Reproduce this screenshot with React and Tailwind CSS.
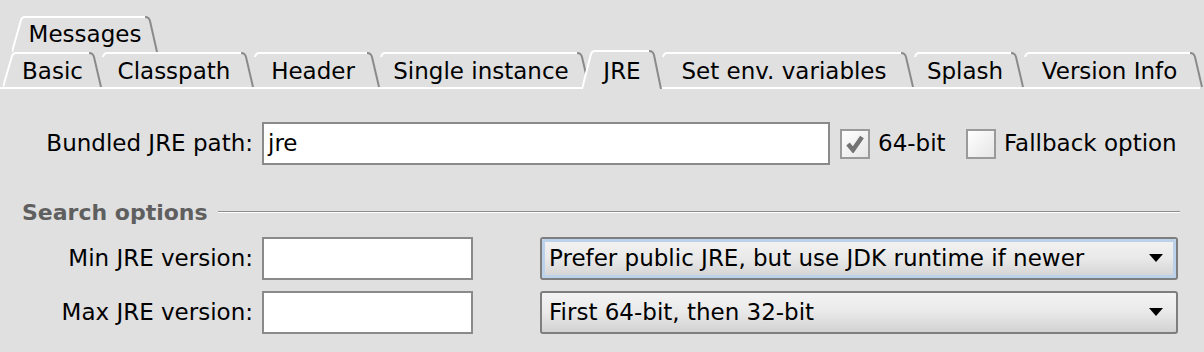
const tabs = [
  { label: 'Basic', w: 99 },
  { label: 'Classpath', w: 160 },
  { label: 'Header', w: 134 },
  { label: 'Single instance', w: 218 },
  { label: 'JRE', w: 80, selected: true },
  { label: 'Set env. variables', w: 260 },
  { label: 'Splash', w: 118 },
  { label: 'Version Info', w: 187 },
];

function TabShape({ w, h, fullLeft, fill }) {
  const s = 9;
  return (
    <svg className="absolute inset-0 pointer-events-none" width={w} height={h} viewBox={`0 0 ${w} ${h}`}>
      {fill && <path d={`M0,${h} L${s},4 Q${s + 1},1 ${s + 4},1 L${w - s - 4},1 Q${w - s},1 ${w - s + 1},5 L${w},${h} Z`} fill="#e0e0e0" />}
      <path d={`M${s + 3},1 L${w - s - 4},1`} stroke="#ffffff" strokeWidth="2" fill="none" />
      {fullLeft ? (
        <path d={`M${s + 4},1 Q${s + 1},1 ${s},4 L0,${h}`} stroke="#ffffff" strokeWidth="2" fill="none" />
      ) : (
        <path d={`M${s + 4},1 Q${s + 1},1 ${s},5`} stroke="#ffffff" strokeWidth="2" fill="none" />
      )}
      <path d={`M${w - s - 4},1 Q${w - s},1 ${w - s + 1},5 L${w - 1},${h}`} stroke="#8a8a8a" strokeWidth="2" fill="none" />
    </svg>
  );
}

function Tab({ label, w, selected, first }) {
  if (selected) {
    return (
      <div className="relative z-10 -mb-[2px] -ml-[8px] flex h-[39px] shrink-0 items-center justify-center pt-[3px]" style={{ width: w }}>
        <TabShape w={w} h={39} fullLeft fill />
        <span className="relative">{label}</span>
      </div>
    );
  }
  return (
    <div className={`relative flex h-[35px] shrink-0 items-center justify-center pt-[3px] ${first ? '' : '-ml-[8px]'}`} style={{ width: w }}>
      <TabShape w={w} h={35} fullLeft={first} />
      <span className="relative">{label}</span>
    </div>
  );
}

function TextField({ value, className }) {
  return (
    <div className={`flex h-[43px] items-center border-2 border-[#8a8a8a] bg-white pl-[4px] ${className}`}>
      {value}
    </div>
  );
}

function CheckBox({ checked }) {
  return (
    <div className="flex h-[30px] w-[30px] shrink-0 items-center justify-center border-2 border-[#9a9a9a] bg-gradient-to-br from-white to-[#e6e6e6]">
      {checked && (
        <svg width="20" height="18" viewBox="0 0 20 18">
          <path d="M3,9 L8,15 L17,2" stroke="#747474" strokeWidth="4.5" fill="none" strokeLinejoin="miter" />
        </svg>
      )}
    </div>
  );
}

function Combo({ text, focused }) {
  return (
    <div className="flex h-[43px] w-[638px] items-center rounded-[3px] border-2 border-[#7e7e7e] bg-gradient-to-b from-[#f3f3f3] via-[#e9e9e9] to-[#d2d2d2]">
      <div className={`flex h-full flex-1 items-center rounded-[2px] pl-[4px] pr-[10px] ${focused ? 'border-[3px] border-[#bcd2ea]' : 'border-[3px] border-transparent'}`}>
        <span className="flex-1">{text}</span>
        <svg width="14" height="9" viewBox="0 0 14 9">
          <path d="M0,0 L14,0 L7,8 Z" fill="#000" />
        </svg>
      </div>
    </div>
  );
}

export default function App() {
  return (
    <div className="h-[352px] w-[1204px] overflow-hidden bg-[#e0e0e0] pt-[16px] font-['DejaVu_Sans',sans-serif] text-[23px] text-black">
      <div className="flex h-[36px] pl-[12px]">
        <div className="relative flex h-[36px] w-[146px] items-center justify-center pt-[1px]">
          <TabShape w={146} h={36} fullLeft />
          <span className="relative">Messages</span>
        </div>
      </div>
      <div className="flex h-[37px] w-[1200px] items-end border-b-2 border-white pl-[3px]">
        {tabs.map((t, i) => (
          <Tab key={t.label} {...t} first={i === 0} />
        ))}
      </div>

      <div className="mt-[33px] flex items-center">
        <div className="w-[262px] pr-[9px] text-right">Bundled JRE path:</div>
        <TextField value="jre" className="w-[568px]" />
        <div className="ml-[10px]"><CheckBox checked /></div>
        <span className="ml-[8px] w-[88px]">64-bit</span>
        <CheckBox />
        <span className="ml-[8px]">Fallback option</span>
      </div>

      <div className="mt-[35px] flex h-[24px] items-center pl-[22px]">
        <span className="text-[22px] font-bold text-[#5f5f5f]">Search options</span>
        <div className="ml-[10px] mr-[24px] h-[2px] flex-1 border-t border-b border-t-[#8e8e8e] border-b-white" />
      </div>

      <div className="mt-[13px] flex items-center">
        <div className="w-[262px] pr-[9px] text-right">Min JRE version:</div>
        <TextField className="w-[211px]" />
        <div className="ml-[67px]">
          <Combo text="Prefer public JRE, but use JDK runtime if newer" focused />
        </div>
      </div>
      <div className="mt-[11px] flex items-center">
        <div className="w-[262px] pr-[9px] text-right">Max JRE version:</div>
        <TextField className="w-[211px]" />
        <div className="ml-[67px]">
          <Combo text="First 64-bit, then 32-bit" />
        </div>
      </div>
    </div>
  );
}
